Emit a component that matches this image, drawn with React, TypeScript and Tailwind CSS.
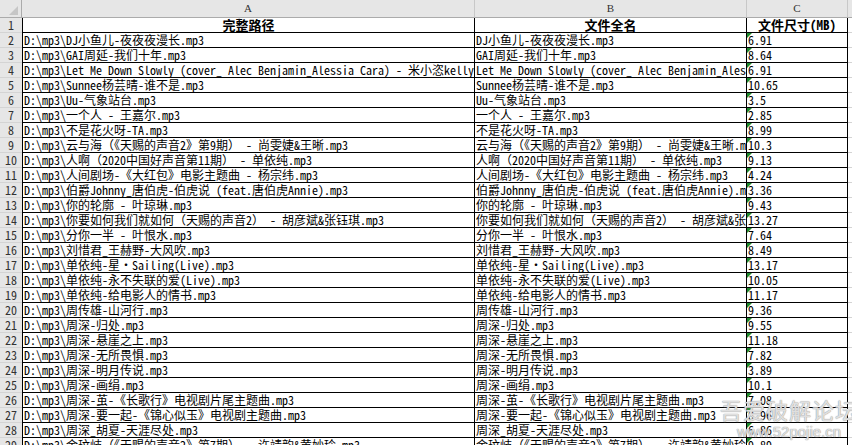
const MONO = { fontFamily: '"Noto Sans Mono CJK SC", "Liberation Mono", "Noto Sans CJK SC", monospace' };

const FILES: [string, string][] = [
  ["DJ小鱼儿-夜夜夜漫长.mp3", "6.91"],
  ["GAI周延-我们十年.mp3", "8.64"],
  ["Let Me Down Slowly (cover_ Alec Benjamin_Alessia Cara) - 米小恣kelly.mp3", "6.91"],
  ["Sunnee杨芸晴-谁不是.mp3", "10.65"],
  ["Uu-气象站台.mp3", "3.5"],
  ["一个人 - 王嘉尔.mp3", "2.85"],
  ["不是花火呀-TA.mp3", "8.99"],
  ["云与海（《天赐的声音2》第9期） - 尚雯婕&王晰.mp3", "10.3"],
  ["人啊（2020中国好声音第11期） - 单依纯.mp3", "9.13"],
  ["人间剧场-《大红包》电影主题曲 - 杨宗纬.mp3", "4.24"],
  ["伯爵Johnny_唐伯虎-伯虎说 (feat.唐伯虎Annie).mp3", "3.36"],
  ["你的轮廓 - 叶琼琳.mp3", "9.43"],
  ["你要如何我们就如何（天赐的声音2） - 胡彦斌&张钰琪.mp3", "13.27"],
  ["分你一半 - 叶恨水.mp3", "7.64"],
  ["刘惜君_王赫野-大风吹.mp3", "8.49"],
  ["单依纯-星・Sailing(Live).mp3", "13.17"],
  ["单依纯-永不失联的爱(Live).mp3", "10.05"],
  ["单依纯-给电影人的情书.mp3", "11.17"],
  ["周传雄-山河行.mp3", "9.36"],
  ["周深-归处.mp3", "9.55"],
  ["周深-悬崖之上.mp3", "11.18"],
  ["周深-无所畏惧.mp3", "7.82"],
  ["周深-明月传说.mp3", "3.89"],
  ["周深-画绢.mp3", "10.1"],
  ["周深-茧-《长歌行》电视剧片尾主题曲.mp3", "7.08"],
  ["周深-要一起-《锦心似玉》电视剧主题曲.mp3", "8.96"],
  ["周深_胡夏-天涯尽处.mp3", "6.86"],
  ["金玟岐（《天赐的声音2》第7期） - 许靖韵&黄妙玲.mp3", "9.89"],
  ["", ""],
];

function RowHead({ n }: { n: number }) {
  return (
    <div className="flex h-[15px] items-end justify-center border-b border-[#d4d4d4] bg-[#e6e6e6] text-[12px] leading-[14px] text-[#333]">
      {n}
    </div>
  );
}

function Cell({ text, last, flag }: { text: string; last?: boolean; flag?: boolean }) {
  return (
    <div
      className={`relative flex h-[15px] items-end overflow-hidden whitespace-nowrap border-b border-black pl-px text-[12px] leading-[14px] text-black ${last ? "border-r border-black" : "border-r border-black"}`}
    >
      {flag && (
        <span className="absolute left-0 top-0 h-0 w-0 border-r-[5px] border-t-[5px] border-r-transparent border-t-[#1f8a2e]" />
      )}
      {text}
    </div>
  );
}

export default function App() {
  return (
    <div className="relative h-[445px] w-[852px] overflow-hidden bg-white" style={MONO}>
      <div className="grid grid-cols-[22px_453px_272px_101px_1fr]">
        {/* column letters */}
        <div className="flex h-[18px] items-end justify-end border-b border-r border-[#ababab] bg-[#e6e6e6] pb-[2px] pr-[3px]">
          <svg width="9" height="9" viewBox="0 0 9 9">
            <polygon points="9,0 9,9 0,9" fill="#c6c6c6" />
          </svg>
        </div>
        {["A", "B", "C", ""].map((c, i) => (
          <div
            key={i}
            className={`flex h-[18px] items-center justify-center border-b border-[#ababab] bg-[#e6e6e6] text-[11px] text-[#333] ${i < 3 ? "border-r border-r-[#c8c8c8]" : ""}`}
            style={{ fontFamily: '"Liberation Serif", serif' }}
          >
            {c}
          </div>
        ))}

        {/* header row */}
        <RowHead n={1} />
        {["完整路径", "文件全名", "文件尺寸(MB)"].map((h, i) => (
          <div
            key={h}
            className={`flex h-[15px] items-end justify-center border-b border-r border-black text-[13px] font-bold leading-[14px] ${i === 0 ? "border-l" : ""}`}
          >
            {h}
          </div>
        ))}
        <div className="h-[15px] border-b border-[#d4d4d4]" />

        {FILES.map(([name, size], i) => (
          <div key={i} className="contents">
            <RowHead n={i + 2} />
            <div className="flex h-[15px] items-end overflow-hidden whitespace-nowrap border-b border-l border-r border-black pl-px text-[12px] leading-[14px]">
              {name ? `D:\\mp3\\${name}` : ""}
            </div>
            <Cell text={name} />
            <Cell text={size} flag={!!size} />
            <div className="h-[15px] border-b border-[#d4d4d4]" />
          </div>
        ))}
      </div>

      {/* watermark */}
      <div
        className="pointer-events-none absolute bottom-[6px] right-[-6px] flex flex-col items-center leading-none text-white/70"
        style={{ fontFamily: '"Noto Sans CJK SC", sans-serif', textShadow: "0 0 1px #9a9a9a, 0 0 1px #9a9a9a" }}
      >
        <span className="text-[22px] tracking-[1px]">吾爱破解论坛</span>
        <span className="mt-[4px] text-[15px]" style={{ fontFamily: '"Liberation Sans", sans-serif' }}>
          www.52pojie.cn
        </span>
      </div>
    </div>
  );
}
